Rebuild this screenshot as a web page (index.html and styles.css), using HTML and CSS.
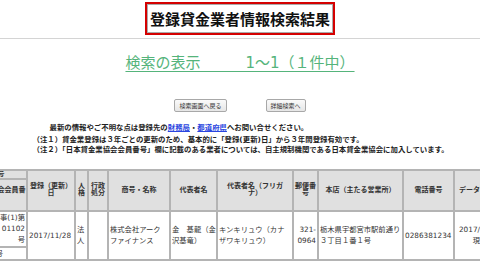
FILE: index.html
```html
<!DOCTYPE html>
<html lang="ja">
<head>
    <meta charset="UTF-8">
    <meta name="viewport" content="width=device-width, initial-scale=1.0">
    <title>登録貸金業者情報検索結果</title>
    <link rel="stylesheet" href="styles.css">
</head>
<body>

    <header class="title-wrap">
        <div class="title">
            <h1>登録貸金業者情報検索結果</h1>
        </div>
    </header>
    <hr class="rule">

    <main>
        <p class="count"><a href="#">検索の表示　　　1〜1（１件中）</a></p>

        <div class="buttons">
            <button type="button">検索画面へ戻る</button>
            <button type="button">詳細検索へ</button>
        </div>

        <div class="notes">
            <p class="lead">最新の情報やご不明な点は登録先の<a href="#">財務局</a>・<a href="#">都道府県</a>へお問い合せください。</p>
            <p>（注１）貸金業登録は３年ごとの更新のため、基本的に「登録(更新)日」から３年間登録有効です。</p>
            <p>（注２）「日本貸金業協会会員番号」欄に記載のある業者については、自主規制機関である日本貸金業協会に加入しています。</p>
        </div>

        <table class="results">
            <colgroup>
                <col class="c-no">
                <col class="c-date">
                <col class="c-kind">
                <col class="c-admin">
                <col class="c-name">
                <col class="c-rep">
                <col class="c-kana">
                <col class="c-zip">
                <col class="c-addr">
                <col class="c-tel">
                <col class="c-upd">
            </colgroup>
            <tr class="head-a">
                <th>登録番号</th>
                <th rowspan="2">登録（更新）<br>日</th>
                <th rowspan="2">人<br>格</th>
                <th rowspan="2">行政<br>処分</th>
                <th rowspan="2">商号・名称</th>
                <th rowspan="2">代表者名</th>
                <th rowspan="2">代表者名（フリガ<br>ナ）</th>
                <th rowspan="2">郵便番<br>号</th>
                <th rowspan="2">本店（主たる営業所）</th>
                <th rowspan="2">電話番号</th>
                <th rowspan="2">データ更新日</th>
            </tr>
            <tr class="head-b">
                <th>日本貸金業協会会員番<br>号</th>
            </tr>
            <tr class="row-a">
                <td class="right">栃木県知事(1)第<br>01102<br>号</td>
                <td rowspan="2">2017/11/28</td>
                <td rowspan="2">法<br>人</td>
                <td rowspan="2"></td>
                <td rowspan="2">株式会社アーク<br>ファイナンス</td>
                <td rowspan="2">金　基龍（金<br>沢基竜）</td>
                <td rowspan="2">キンキリュウ（カナ<br>ザワキリュウ）</td>
                <td rowspan="2" class="right">321-<br>0964</td>
                <td rowspan="2">栃木県宇都宮市駅前通り<br>３丁目１番１号</td>
                <td rowspan="2">0286381234</td>
                <td rowspan="2" class="center">2017/11/28<br>現在</td>
            </tr>
            <tr class="row-b">
                <td>第0001234号</td>
            </tr>
        </table>
    </main>

</body>
</html>
```

FILE: styles.css
```css
html, body {
    overflow: hidden;
}
body {
    margin: 0;
    background-color: #fff;
    color: #222;
    font-family: "DejaVu Sans", "Noto Sans CJK JP", sans-serif;
}
.title-wrap {
    text-align: center;
    padding-top: 2px;
}
.title {
    display: inline-block;
    border: 2px solid #d40000;
}
.title h1 {
    margin: 0;
    padding: 5px 2px;
    border: 1px solid #aaa;
    font-family: "Noto Sans CJK JP", sans-serif;
    font-size: 15px;
    line-height: 17px;
    font-weight: bold;
    color: #111;
}
.rule {
    margin: 3px 0 0;
    border: 0;
    border-top: 1px solid #d4d4d4;
}
.count {
    margin: 15px 0 0;
    text-align: center;
    font-size: 15px;
    line-height: 18px;
}
.count a {
    color: #55b47b;
    text-underline-offset: 3px;
}
.buttons {
    display: flex;
    justify-content: center;
    gap: 39px;
    margin-top: 27px;
}
.buttons button {
    padding: 2px 4px;
    border: 1px solid #a8a8a8;
    border-radius: 2px;
    background: linear-gradient(#fafafa, #e6e6e6);
    color: #333;
    font-family: "Noto Sans CJK JP", sans-serif;
    font-size: 6px;
    line-height: 7px;
}
.notes {
    width: 415px;
    margin: 11px auto 0;
    font-size: 7.4px;
    line-height: 10.5px;
    font-weight: bold;
}
.notes p {
    margin: 0;
    white-space: nowrap;
}
.notes .lead {
    padding-left: 17px;
    margin-bottom: 1px;
}
.notes a {
    color: #2a45e0;
}
.results {
    margin: 13px 0 0 -47px;
    width: 552px;
    table-layout: fixed;
    border-collapse: collapse;
    border: 2px solid #a4a4a4;
    font-size: 7.3px;
    line-height: 11px;
    color: #333;
}
.c-no { width: 73px; }
.c-date { width: 48px; }
.c-kind { width: 13px; }
.c-admin { width: 20px; }
.c-name { width: 62px; }
.c-rep { width: 47px; }
.c-kana { width: 76px; }
.c-zip { width: 25px; }
.c-addr { width: 85px; }
.c-tel { width: 51px; }
.c-upd { width: 52px; }
.results th, .results td {
    padding: 0 1px;
    border: 2px solid #b4b4b4;
    vertical-align: middle;
}
.results th {
    padding: 0;
    background-color: #e0e0e0;
    font-size: 7px;
    line-height: 10px;
    font-weight: bold;
    text-align: center;
}
.results td {
    background-color: #fff;
    text-align: left;
    white-space: nowrap;
    overflow: hidden;
}
.results .right {
    text-align: right;
}
.results .center {
    text-align: center;
}
.head-a th {
    height: 7px;
    line-height: 7px;
    overflow: hidden;
}
.head-b th {
    height: 30px;
}
.row-a td {
    height: 34px;
}
.row-b td {
    height: 11px;
}
```
